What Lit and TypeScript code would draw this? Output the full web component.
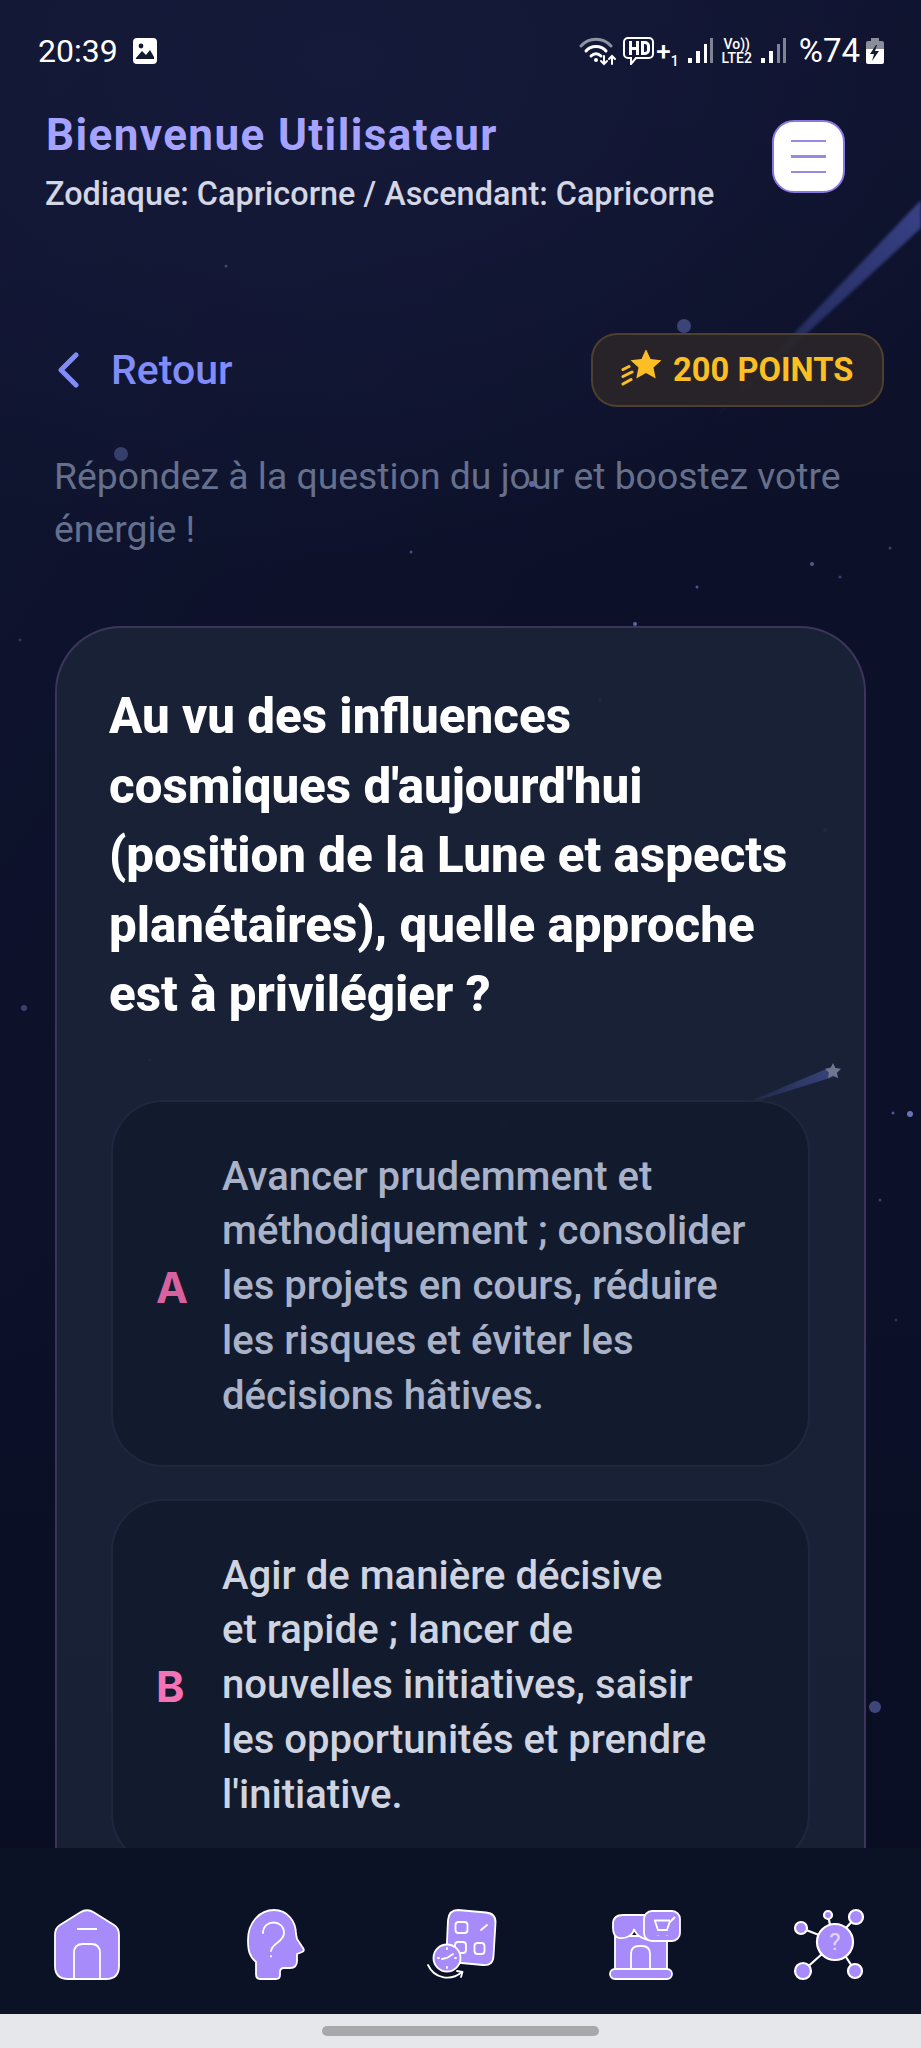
import { LitElement, html, css, svg } from "lit";
import { customElement } from "lit/decorators.js";

const DOTS: [number, number, number, number][] = [
  [121, 454, 7, .35], [684, 326, 7, .4], [532, 484, 3, .7], [875, 1707, 6, .45], [910, 1114, 3, .8],
  [24, 1008, 3, .4], [505, 1124, 3, .3], [226, 266, 1.5, .4], [411, 552, 1.5, .5], [812, 564, 2, .6],
  [840, 577, 1.5, .4], [697, 587, 1.5, .6], [635, 624, 2, .7], [890, 548, 1.5, .4], [600, 700, 2, .25],
  [825, 830, 2, .3], [150, 1060, 1.5, .3], [300, 1000, 1.5, .25], [505, 1126, 4, .22], [672, 1530, 2, .25],
  [580, 1320, 4, .1], [893, 1113, 1.5, .6], [880, 1200, 1.5, .4], [20, 640, 1.5, .3], [350, 1740, 1.5, .3],
  [700, 1740, 2, .25], [230, 1640, 1.5, .25], [896, 1320, 1.5, .3],
];

@customElement("app-root")
export class AppRoot extends LitElement {
  static styles = css`
    :host { display: block; width: 921px; height: 2048px; font-family: Roboto, "Liberation Sans", sans-serif; overflow: hidden; }
    * { box-sizing: border-box; }
    .page { height: 2048px; display: flex; flex-direction: column; }
    .main { position: relative; flex: 1; min-height: 0; overflow: hidden;
      background:
        radial-gradient(760px 520px at 340px 60px, #151a3a 0%, rgba(21,26,58,0) 100%),
        linear-gradient(125deg, rgba(20,26,58,.5) 0%, rgba(12,16,38,0) 45%),
        linear-gradient(180deg, #0e122d 0%, #0c1028 30%, #0c1028 70%, #0a0e24 100%); }
    .sky { position: absolute; inset: 0; width: 921px; height: 1848px; pointer-events: none; }
    .tail { filter: blur(1.5px); }
    .content { position: relative; display: flex; flex-direction: column; }

    .status { height: 78px; display: flex; align-items: center; padding: 24px 36px 0 38px; color: #fff; }
    .time { font-size: 32px; font-weight: 400; width: 79px; }
    .gallery { margin-left: 15px; width: 26px; height: 28px; }
    .sp { flex: 1; }
    .icons { display: flex; align-items: center; height: 30px; }
    .hdp { font-size: 26px; font-weight: 500; line-height: 24px; margin-left: 2px; }
    .sub1 { font-size: 14px; font-weight: 500; align-self: flex-end; margin-bottom: -3px; margin-right: 9px; }
    .volte { display: flex; flex-direction: column; align-items: center; font-size: 14px; line-height: 14px; font-weight: 500; width: 36px; margin: 0 6px; }
    .pct { font-size: 33px; font-weight: 400; margin-left: 13px; line-height: 30px; }

    .head { display: flex; justify-content: space-between; padding: 28px 76px 0 46px; }
    .title { font-size: 44px; line-height: 48px; font-weight: 700; color: #a5a3ff; letter-spacing: 1.4px; margin-top: 5px; }
    .zodiac { font-size: 32.4px; line-height: 40px; color: #d3d6e4; font-weight: 500; margin: 15px 0 0 -1px; }
    .menu { width: 73px; height: 73px; background: #fff; border: 2px solid #8878e4; border-radius: 22px; display: flex; flex-direction: column; gap: 13px; align-items: center; justify-content: center; margin-top: 14px; }
    .menu i { display: block; width: 35px; height: 2.5px; background: #9a88e4; }

    .row { display: flex; justify-content: space-between; align-items: center; padding: 0 37px 0 57px; margin-top: 119px; }
    .back { display: flex; align-items: center; gap: 32px; color: #818cf8; font-size: 41px; font-weight: 500; }
    .badge { width: 293px; height: 74px; border-radius: 26px; border: 2px solid rgba(214,170,70,.22); background: rgba(42,38,40,.9); display: flex; align-items: center; padding-left: 28px; gap: 12px; color: #fbbf24; font-size: 32.7px; font-weight: 700; }

    .lead { margin: 43px 0 0 54px; font-size: 37.35px; line-height: 53px; color: #64708c; }

    .card { position: relative; margin: 70px 55px 0; height: 1500px; border: 2px solid rgba(120,86,150,.38); border-radius: 66px; background: rgba(28,37,58,.8); padding: 54px 52px 0; }
    .spark { position: absolute; left: 648px; top: 428px; width: 150px; height: 70px; }
    .q { position: relative; font-size: 49.3px; line-height: 69.5px; font-weight: 800; color: #fff; margin: 0 0 70px; }
    .opt { position: relative; height: 367px; border: 2px solid rgba(60,72,100,.28); border-radius: 52px; background: rgba(18,27,46,.95); display: flex; align-items: center; padding: 7px 0 0 43px; margin: 0 0 32px 2px; width: 699px; }
    .l { width: 66px; flex: none; font-size: 43px; font-weight: 700; font-family: Inter, Roboto, sans-serif; }
    .t { font-size: 40.1px; line-height: 54.7px; font-weight: 500; }
    .a .l { color: #d8619f; }
    .a .t { color: #a9b2c8; }
    .b .l { color: #f472b6; }
    .b .t { color: #cfd4e0; }

    .nav { height: 166px; flex: none; background: #0c1225; display: flex; justify-content: space-between; align-items: flex-start; padding: 58px 57px 0 51px; position: relative; }
    .nav svg { width: 72px; height: 76px; display: block; overflow: visible; }
    .gesture { height: 34px; flex: none; background: #e5e7ea; display: flex; justify-content: center; align-items: center; }
    .gesture i { display: block; width: 277px; height: 10px; border-radius: 5px; background: #a6a8aa; }
  `;

  private statusIcons() {
    return html`
      <div class="icons">
        <svg width="38" height="30" viewBox="0 0 38 30" fill="none" stroke="#fff" stroke-linecap="round">
          <path d="M2 10C10 1 24 1 32 10" stroke="#8e93a3" stroke-width="3"/>
          <path d="M7 15C12 9 22 9 27 15" stroke-width="3"/>
          <path d="M12 20C15 17 19 17 22 20" stroke-width="3"/>
          <circle cx="17" cy="24" r="2" fill="#fff" stroke="none"/>
          <path d="M25 20v8M22 25l3 3 3-3M33 28v-8M30 23l3-3 3 3" stroke-width="2"/>
        </svg>
        <svg style="margin-left:6px" width="31" height="28" viewBox="0 0 31 28">
          <path d="M5 1h21a4 4 0 0 1 4 4v12a4 4 0 0 1-4 4H13l-5 6v-6H5a4 4 0 0 1-4-4V5a4 4 0 0 1 4-4z" fill="none" stroke="#fff" stroke-width="2"/>
          <path d="M6 4h3v6h4V4h3v14h-3v-5H9v5H6zM18 4h4a5 5 0 0 1 5 5v4a5 5 0 0 1-5 5h-4zm3 3v8h1a2 2 0 0 0 2-2V9a2 2 0 0 0-2-2z" fill="#fff"/>
        </svg>
        <span class="hdp">+</span><span class="sub1">1</span>
        <svg width="25" height="26" viewBox="0 0 25 26"><rect x="0" y="20" width="4" height="5" fill="#fff"/><rect x="8" y="13" width="4" height="12" fill="#fff"/><rect x="16" y="6" width="3" height="19" fill="#fff"/><rect x="22" y="0" width="3" height="25" fill="#7f8494"/></svg>
        <span class="volte"><span>Vo))</span><span>LTE2</span></span>
        <svg width="25" height="26" viewBox="0 0 25 26"><rect x="0" y="20" width="4" height="5" fill="#fff"/><rect x="8" y="13" width="4" height="12" fill="#fff"/><rect x="16" y="6" width="3" height="19" fill="#7f8494"/><rect x="22" y="0" width="3" height="25" fill="#7f8494"/></svg>
        <span class="pct">%74</span>
        <svg style="margin-left:5px" width="20" height="28" viewBox="0 0 20 28"><path d="M6 1h8v3h3a2 2 0 0 1 2 2v7H1V6a2 2 0 0 1 2-2h3z" fill="#8b8e9a"/><path d="M1 12h18v13a2 2 0 0 1-2 2H3a2 2 0 0 1-2-2z" fill="#fff"/><path d="M11 8l-6 9h4l-2 7 7-10h-4l2-6z" fill="#141830"/></svg>
      </div>`;
  }

  private sky() {
    return svg`
      <defs>
        <linearGradient id="tail" x1="921" y1="205" x2="700" y2="430" gradientUnits="userSpaceOnUse">
          <stop offset="0" stop-color="#5563c4" stop-opacity=".58"/><stop offset=".55" stop-color="#5563c4" stop-opacity=".34"/><stop offset="1" stop-color="#5563c4" stop-opacity="0"/>
        </linearGradient>
      </defs>
      <path class="tail" d="M921 200V228L700 432Z" fill="url(#tail)"/>
      ${DOTS.map(([x, y, r, o]) => svg`<circle cx=${x} cy=${y} r=${r} fill="#7f8be0" opacity=${o}/>`)}
    `;
  }

  private navIcons() {
    const f = "#a78bfa", s = "#fff";
    return html`
      <svg viewBox="0 0 72 76" fill=${f} stroke=${s} stroke-width="1.8">
        <path d="M29 6.500Q36 2 43 6.500L63 19Q68 22 68 29V60Q68 73 55 73H17Q4 73 4 60V29Q4 22 9 19Z"/>
        <path d="M23 72V47Q23 38 32 38H40Q49 38 49 47V72M26 23H46" fill="none"/>
      </svg>
      <svg viewBox="0 0 72 76" fill=${f} stroke=${s} stroke-width="1.8">
        <path d="M24 73Q20 73 20 68V56C13 50 12 44 12 34C12 16 24 4 38 4C52 4 60 16 60 28L61 33L67 42Q69 45 66 46L61 48V55Q61 62 54 62H48Q44 62 44 66V69Q44 73 40 73Z"/>
        <path d="M27 27C27 13 48 13 48 27C48 36 36 37 35 45M35 50V50.500" fill="none" stroke-linecap="round"/>
      </svg>
      <svg viewBox="0 0 72 76" fill=${f} stroke=${s} stroke-width="1.8">
        <path d="M26 14Q27 4 36 4L64 6.500Q74 7.500 73.500 17L71.500 50Q71 60 61 59L34 56.500Q24 55.500 24.500 46Z"/>
        <g fill="none"><rect x="33.500" y="16" width="12" height="11" rx="3"/><rect x="33" y="36" width="11" height="11" rx="3"/><rect x="52.500" y="37" width="10" height="11" rx="3"/><path d="M59 24L65 19" stroke-linecap="round"/></g>
        <circle cx="25" cy="52" r="13.500"/>
        <path d="M20 53L25 52L31 48M25 42V43M25 61V62M16 52H17M33 52H34" fill="none" stroke-linecap="round"/>
        <path d="M6 59C12 72 28 76 40 66M35 65L40.500 66L39 71" fill="none" stroke-linecap="round" stroke-linejoin="round"/>
      </svg>
      <svg viewBox="0 0 72 76" fill=${f} stroke=${s} stroke-width="1.8">
        <path d="M8 30H60V65H8Z"/>
        <path d="M24 64V48Q24 40 32 40H35Q43 40 43 48V64" fill="none"/>
        <path d="M16 9H45V34C40 34 30 32 27 23C26 30 18 33 12 32C8 31 6 27 6 22V18Q6 9 16 9Z"/>
        <rect x="37" y="5" width="36" height="30" rx="8"/>
        <path d="M47 14.500H63M48 15L51 24H60L63 15M68 11L62 17M51 29V29.500M60 29V29.500" fill="none"/>
        <rect x="3" y="63" width="62" height="10" rx="5"/>
      </svg>
      <svg viewBox="0 0 72 76" fill=${f} stroke=${s} stroke-width="2.2">
        <path d="M9 22L27 29M36 9L38 19M64 11L54 22M11 65L30 48M63 65L54 51" fill="none"/>
        <circle cx="9" cy="22" r="6"/><circle cx="36" cy="9" r="4"/><circle cx="64" cy="11" r="7"/>
        <circle cx="11" cy="65" r="8"/><circle cx="63" cy="65" r="7"/><circle cx="43" cy="36" r="18"/>
        <text x="43" y="44" font-size="24" text-anchor="middle" fill="#e2d8fe" stroke="none" font-family="Roboto">?</text>
      </svg>`;
  }

  render() {
    return html`
      <div class="page">
        <div class="main">
          <svg class="sky" viewBox="0 0 921 1848">${this.sky()}</svg>
          <div class="content">
            <div class="status">
              <span class="time">20:39</span>
              <svg class="gallery" viewBox="0 0 26 28"><path d="M5 1h16a4 4 0 0 1 4 4v18a4 4 0 0 1-4 4H5a4 4 0 0 1-4-4V5a4 4 0 0 1 4-4z" fill="#fff"/><path d="M4 21l6-7 4 4 4-5 4 7v2H4z" fill="#141830"/><circle cx="9" cy="9" r="2.4" fill="#141830"/></svg>
              <span class="sp"></span>
              ${this.statusIcons()}
            </div>
            <div class="head">
              <div>
                <div class="title">Bienvenue Utilisateur</div>
                <div class="zodiac">Zodiaque: Capricorne / Ascendant: Capricorne</div>
              </div>
              <div class="menu"><i></i><i></i><i></i></div>
            </div>
            <div class="row">
              <div class="back">
                <svg width="22" height="36" viewBox="0 0 22 36" fill="none" stroke="#818cf8" stroke-width="5" stroke-linecap="round" stroke-linejoin="round"><path d="M19 3L4 18L19 33"/></svg>
                <span>Retour</span>
              </div>
              <div class="badge">
                <svg width="40" height="40" viewBox="0 0 40 40"><path d="M25 -1l4.500 10 11 1.200-8 7.300 2.200 11-9.700-5.500-9.700 5.500 2.200-11-8-7.300 11-1.200z" fill="#fbbf24"/><path d="M2 19.500L8 16.500M2 26.500L11 22M2 34L10 29.500" stroke="#fbbf24" stroke-width="3" fill="none" stroke-linecap="round"/></svg>
                <span>200 POINTS</span>
              </div>
            </div>
            <p class="lead">Répondez à la question du jour et boostez votre<br>énergie !</p>
            <div class="card">
              <svg class="spark" viewBox="0 0 150 70">
                <defs><linearGradient id="tail2" x1="128" y1="16" x2="26" y2="53" gradientUnits="userSpaceOnUse"><stop offset="0" stop-color="#5f6fd0" stop-opacity=".45"/><stop offset="1" stop-color="#5f6fd0" stop-opacity="0"/></linearGradient></defs>
                <path d="M126 11L131 20L26 53Z" fill="url(#tail2)"/>
                <path d="M128 7l2.500 5 5.500.8-4 3.900 1 5.500-5-2.600-5 2.600 1-5.500-4-3.900 5.500-.8z" fill="#6f7690"/>
              </svg>
              <p class="q">Au vu des influences<br>cosmiques d'aujourd'hui<br>(position de la Lune et aspects<br>planétaires), quelle approche<br>est à privilégier ?</p>
              <div class="opt a"><span class="l">A</span><span class="t">Avancer prudemment et<br>méthodiquement ; consolider<br>les projets en cours, réduire<br>les risques et éviter les<br>décisions hâtives.</span></div>
              <div class="opt b"><span class="l">B</span><span class="t">Agir de manière décisive<br>et rapide ; lancer de<br>nouvelles initiatives, saisir<br>les opportunités et prendre<br>l'initiative.</span></div>
            </div>
          </div>
        </div>
        <nav class="nav">${this.navIcons()}</nav>
        <div class="gesture"><i></i></div>
      </div>`;
  }
}
